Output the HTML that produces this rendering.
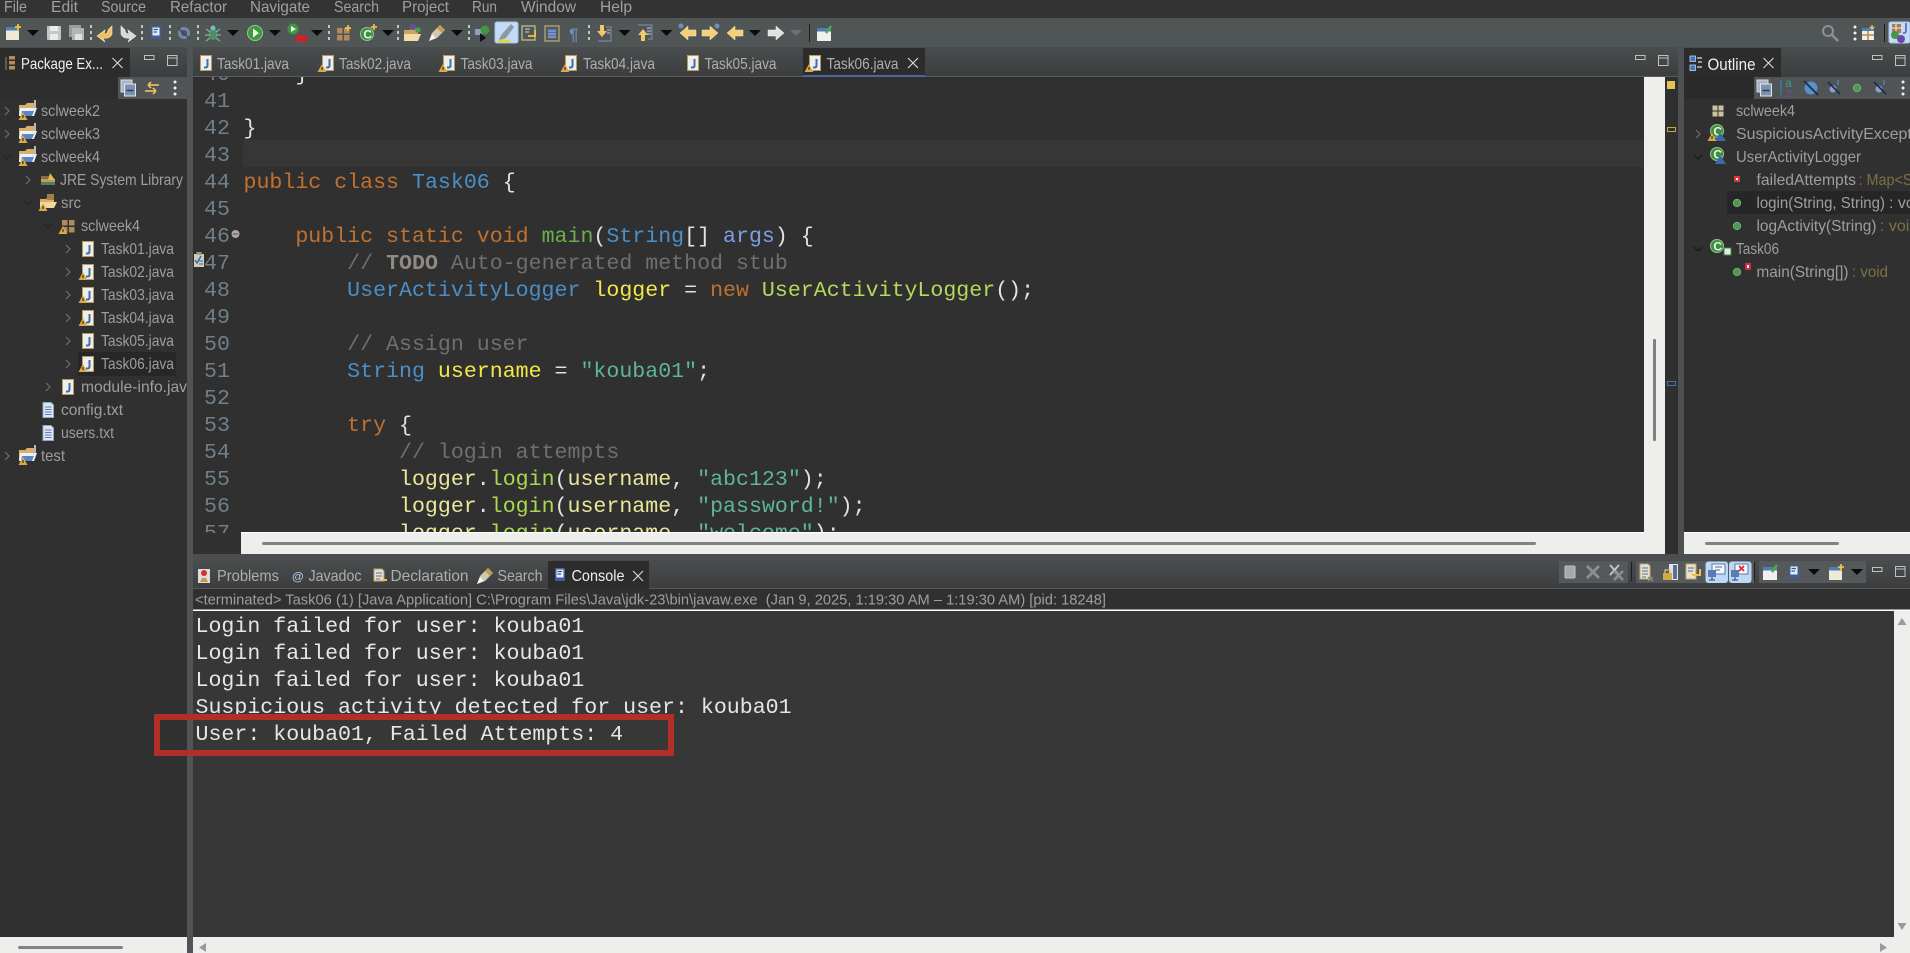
<!DOCTYPE html>
<html><head><meta charset="utf-8"><title>Eclipse</title>
<style>
html,body{margin:0;padding:0;background:#303030;width:1910px;height:953px;overflow:hidden}
svg{display:block}
text{font-family:"Liberation Sans",sans-serif;font-size:16px;white-space:pre}
.m{fill:#a0a0a0}
.t{fill:#aeaeae}
.tree{fill:#9e9e9e}
.ty{fill:#7d7044}
.c{font-family:"Liberation Mono",monospace;font-size:21.6px;fill:#e2e2e2}
.n{font-family:"Liberation Mono",monospace;font-size:21.6px;fill:#70808a}
.k{fill:#c0712f}.b{fill:#4a8fc7}.g{fill:#69b04a}.a{fill:#7c9fe6}.cm{fill:#6f6f6f}.td{fill:#8f8b82;font-weight:bold}
.y{fill:#f2e84b}.py{fill:#ebe79a}.lg{fill:#a9d94f}.s{fill:#5fb49c}.ug{fill:#b5d95a}
.con{font-family:"Liberation Mono",monospace;font-size:21.6px;fill:#e6e6e6}
</style></head><body>
<svg width="1910" height="953" viewBox="0 0 1910 953" xmlns="http://www.w3.org/2000/svg">
<defs>
<linearGradient id="tabg" x1="0" y1="0" x2="0" y2="1"><stop offset="0" stop-color="#4a4d4e"/><stop offset="1" stop-color="#3b3d3e"/></linearGradient>
<clipPath id="codeclip"><rect x="193" y="77" width="1451" height="456"/></clipPath>
<clipPath id="menuclip"><rect x="0" y="0" width="1910" height="18"/></clipPath>
<clipPath id="outclip"><rect x="1684" y="99" width="226" height="434"/></clipPath>
<clipPath id="treeclip"><rect x="0" y="99" width="187" height="838"/></clipPath>
<g id="dd"><path d="M-6-3H6L0 3Z" fill="#0a0a0a"/></g>
<g id="sep"><path d="M0-8V-5M0-2V1M0 4V7" stroke="#c4c4c4" stroke-width="2"/></g>
<g id="jf"><rect x="-5.500" y="-7.500" width="11" height="15" fill="#eeeeea" stroke="#b89a5c"/><path d="M1.500-4V2.500Q1.500 4.500-.5 4.500H-2" fill="none" stroke="#3c6eb0" stroke-width="2"/></g>
<g id="lk"><path d="M0-5 4.500 3H-4.500Z" fill="#d9a94a"/><rect x="-.7" y="-2" width="1.400" height="3" fill="#5a4310"/></g>
<g id="prj"><path d="M-9-5H-3L-1-7H6V5H-9Z" fill="#d8b06a"/><path d="M-8-2H9L6 6H-9Z" fill="#eef2fa"/><path d="M-6 1H6L4 6H-7Z" fill="#5a86c8"/><path d="M7-10V-2Q7 0 4 0" fill="none" stroke="#e4e4e4" stroke-width="1.500"/></g>
<g id="src"><path d="M-8-3H-2L0-5H6V6H-8Z" fill="#d8b06a"/><path d="M-8 0H9L6 6H-8Z" fill="#f0d8a0"/><rect x="-1" y="-8" width="7" height="6" fill="#a67c46"/></g>
<g id="pk"><rect x="-6" y="-6" width="5.500" height="5.500" fill="#b08a5c"/><rect x="1" y="-6" width="5.500" height="5.500" fill="#b08a5c"/><rect x="-6" y="1" width="5.500" height="5.500" fill="#b08a5c"/><rect x="1" y="1" width="5.500" height="5.500" fill="#b08a5c"/></g>
<g id="txt"><path d="M-5-7.500H3L5.500-5V7.500H-5Z" fill="#dfe6f2" stroke="#8ea8cc"/><path d="M-3-3H3.500M-3-.5H3.500M-3 2H3.500M-3 4.500H3.500" stroke="#5a80b8"/></g>
<g id="cl"><circle r="6.500" fill="#3d8f3d" stroke="#8cc88c"/><text x="-3.700" y="4.500" style="font-size:12px;font-weight:bold;fill:#f0f0f0;font-family:'Liberation Sans',sans-serif">C</text></g>
<g id="dot"><circle r="3.800" fill="#4f9a52" stroke="#7fbf80" stroke-width=".7"/></g>
<g id="col"><rect x="-8" y="-8" width="11" height="12" fill="#a9b4c4" stroke="#d4dae2"/><rect x="-4.500" y="-4" width="11" height="12" fill="#7e92ad" stroke="#e2e6ec"/><path d="M-2.500 2.500H4.500" stroke="#16406f" stroke-width="1.500"/></g>
<g id="vd"><circle cy="-6" r="1.500" fill="#f0f0f0"/><circle cy="0" r="1.500" fill="#f0f0f0"/><circle cy="6" r="1.500" fill="#f0f0f0"/></g>
<g id="x"><path d="M-5-5 5 5M5-5-5 5" stroke="#dcdcdc" stroke-width="1.100"/></g>
<g id="min"><rect x="0" y="0" width="9.500" height="4" fill="none" stroke="#c0c0c0"/></g>
<g id="max"><rect x="0" y="0" width="9.500" height="10" fill="none" stroke="#c0c0c0"/><path d="M0 2.500H9.500" stroke="#c0c0c0"/></g>
<g id="cr"><path d="M-2-4 2 0-2 4" fill="none" stroke="#6e6e6e" stroke-width="1.200"/></g>
<g id="cd"><path d="M-4-2 0 2 4-2" fill="none" stroke="#242424" stroke-width="1.300"/></g>
<g id="cdo"><path d="M-4-2 0 2 4-2" fill="none" stroke="#1c1c1c" stroke-width="1.500"/></g>
<g id="co"><rect x="-5" y="-7" width="10" height="13" rx="1" fill="#3e5f9a"/><rect x="-3.500" y="-5.500" width="7" height="8" fill="#e6ecf6"/><path d="M-2.500-3.500H2M-2.500-1H1" stroke="#365689" stroke-width="1.200"/></g>
<g id="fp"><path d="M-7-6H7V7H-7Z" fill="#f0f0ee"/><rect x="-7" y="-6" width="14" height="3.500" fill="#4d7fb5"/><path d="M2-1 7-8" stroke="#4caa3f" stroke-width="2.500"/></g>
<g id="nw"><rect x="-7" y="-6" width="13" height="13" fill="#f0ead4"/><rect x="-7" y="-6" width="13" height="3.500" fill="#4d7fb5"/><path d="M5-9V-3M2-6H8" stroke="#f0c040" stroke-width="1.800"/></g>
</defs>

<!-- base -->
<rect width="1910" height="953" fill="#303030"/>
<!-- menu bar -->
<rect width="1910" height="18" fill="#333333"/>
<g clip-path="url(#menuclip)" class="m">
<text class="m" x="4" y="12" textLength="23" lengthAdjust="spacingAndGlyphs">File</text>
<text class="m" x="51" y="12" textLength="27" lengthAdjust="spacingAndGlyphs">Edit</text>
<text class="m" x="101" y="12" textLength="45" lengthAdjust="spacingAndGlyphs">Source</text>
<text class="m" x="170" y="12" textLength="57" lengthAdjust="spacingAndGlyphs">Refactor</text>
<text class="m" x="250" y="12" textLength="60" lengthAdjust="spacingAndGlyphs">Navigate</text>
<text class="m" x="334" y="12" textLength="45" lengthAdjust="spacingAndGlyphs">Search</text>
<text class="m" x="402" y="12" textLength="47" lengthAdjust="spacingAndGlyphs">Project</text>
<text class="m" x="472" y="12" textLength="25" lengthAdjust="spacingAndGlyphs">Run</text>
<text class="m" x="521" y="12" textLength="55" lengthAdjust="spacingAndGlyphs">Window</text>
<text class="m" x="600" y="12" textLength="32" lengthAdjust="spacingAndGlyphs">Help</text>
</g>
<!-- toolbar -->
<rect y="18" width="1910" height="29" fill="#505556"/>
<rect x="495" y="22" width="23" height="21" rx="2" fill="#c3dbf5" stroke="#a5c5ea"/>
<rect x="1889" y="22" width="21" height="21" rx="2" fill="#c3dbf5" stroke="#a5c5ea"/>
<g>
<use href="#nw" x="13" y="33"/><use href="#dd" x="33" y="33"/>
<g transform="translate(54 33)"><rect x="-7" y="-7" width="14" height="14" rx="1" fill="#c6c6c6"/><rect x="-4" y="-7" width="8" height="5" fill="#ececec"/><rect x="-4" y="1" width="8" height="6" fill="#ececec"/></g>
<g transform="translate(77 33)"><rect x="-8" y="-8" width="12" height="12" fill="#9c9c9c"/><rect x="-5" y="-5" width="12" height="12" fill="#b4b4b4"/><rect x="-2" y="1" width="7" height="6" fill="#e2e2e2"/></g>
<use href="#sep" x="91" y="33"/>
<path d="M112 26V34Q110 39 103 38L105 42 97 36 105 30 104 34Q108 34 108 30Z" fill="#f0c060" stroke="#fbe7b0" stroke-width=".6"/>
<path d="M121 26V34Q123 39 130 38L128 42 136 36 128 30 129 34Q125 34 125 30Z" fill="#d8d8d8" stroke="#f0f0f0" stroke-width=".6"/>
<use href="#sep" x="142" y="33"/><use href="#co" x="156" y="33"/><use href="#sep" x="170" y="33"/>
<g transform="translate(184 33)"><circle r="6" fill="#7488a8"/><circle r="3" fill="#505556"/><path d="M-6-5 6 6" stroke="#35486a" stroke-width="1.500"/></g>
<use href="#sep" x="198" y="33"/>
<g transform="translate(213 33)"><ellipse cx="0" cy="1" rx="4.500" ry="6" fill="#4d8f68"/><path d="M-7-4-3-1M7-4 3-1M-8 2H-3M8 2H3M-7 8-3 5M7 8 3 5" stroke="#9ac0a8"/><circle cy="-5" r="2.500" fill="#7ab8c8"/></g>
<use href="#dd" x="233" y="33"/>
<g transform="translate(255 33)"><circle r="7.500" fill="#3f9a3f" stroke="#92cc86"/><path d="M-2-4.500 4 0-2 4.500Z" fill="#f4f4f4"/></g>
<use href="#dd" x="275" y="33"/>
<g transform="translate(297 33)"><circle cx="-4" cy="-4" r="5.500" fill="#3f9a3f"/><path d="M-6-7-1-4-6-1Z" fill="#f4f4f4"/><rect x="-1" y="2" width="11" height="7" rx="1" fill="#c8242c"/></g>
<use href="#dd" x="317" y="33"/>
<use href="#sep" x="329" y="33"/>
<use href="#pk" x="343" y="34"/><path d="M348 25V31M345 28H351" stroke="#f0c040" stroke-width="1.700"/>
<use href="#cl" x="367" y="34"/><path d="M374 24V30M371 27H377" stroke="#f0c040" stroke-width="1.700"/>
<use href="#dd" x="388" y="33"/>
<use href="#sep" x="398" y="33"/>
<g transform="translate(412 34)"><path d="M-8-4H-2L0-6H6V6H-8Z" fill="#c8a466"/><path d="M-8 0H9L6 7H-8Z" fill="#f2dda8"/><circle cx="1" cy="-7" r="3" fill="#6050a0"/><circle cx="6" cy="-4" r="2.800" fill="#4d9a50"/></g>
<g transform="translate(437 33)"><path d="M-8 8-5 0 3-8 8-3 0 5Z" fill="#cfc8b4"/><path d="M-8 8-5 1-1 5Z" fill="#f6f6f2"/><path d="M3-8 8-3 5 0 0-5Z" fill="#c89a50"/></g>
<use href="#dd" x="457" y="33"/>
<use href="#sep" x="469" y="33"/>
<g transform="translate(482 33)"><rect x="-7" y="-4" width="7" height="6" fill="#8fa0bc"/><path d="M-2 0 4 5-2 9Z" fill="#111"/><circle cx="3" cy="-3" r="4.500" fill="#439443"/></g>
<g transform="translate(506 33)"><path d="M-8 8-4 1 5-9 8-6 0 5Z" fill="#8c98a6"/><path d="M-8 8H4" stroke="#e8d24a" stroke-width="3"/></g>
<g transform="translate(529 33)"><rect x="-7" y="-7" width="13" height="14" fill="none" stroke="#c8b888" stroke-width="1.300"/><path d="M-4-4H1M-4-1H0" stroke="#cfd4da"/><path d="M6-3V3H-1" fill="none" stroke="#f0c040" stroke-width="1.800"/></g>
<g transform="translate(552 33)"><rect x="-7" y="-7" width="14" height="15" fill="none" stroke="#b8a878" stroke-width="1.300"/><rect x="-4.500" y="-4.500" width="9" height="10" fill="#5470a0"/><path d="M-4-2H4M-4 1H4M-4 4H4" stroke="#9fb4d8"/></g>
<text x="569" y="40" style="font-size:17px;fill:#6a8cb8;font-weight:bold">¶</text>
<use href="#sep" x="589" y="33"/>
<g transform="translate(604 33)"><path d="M-4-8H0V-2H3L-2 4-7-2H-4Z" fill="#f0c86a"/><path d="M2-6H7V8H-6" fill="none" stroke="#7f94b4"/><path d="M3-3H6M3 0H6" stroke="#c8d0dc"/></g>
<use href="#dd" x="624.500" y="33"/>
<g transform="translate(645 33)"><path d="M-4 8H0V2H3L-2-4-7 2H-4Z" fill="#f0c86a"/><path d="M-7-8H7V6H3" fill="none" stroke="#8094b4"/><path d="M2-5H6M2-2H6M2 1H6" stroke="#c8d0dc"/></g>
<use href="#dd" x="666.500" y="33"/>
<g transform="translate(688 33)"><path d="M8-3H0V-7L-8 0 0 7V3H8Z" fill="#f3cf7c" stroke="#fbe8b8" stroke-width=".5"/><circle cx="-7" cy="-7" r="2.500" fill="#6f8fb8"/></g>
<g transform="translate(710 33)"><path d="M-8-3H0V-7L8 0 0 7V3H-8Z" fill="#f3cf7c" stroke="#fbe8b8" stroke-width=".5"/><circle cx="7" cy="-7" r="2.500" fill="#6f8fb8"/></g>
<path d="M743 30H735V26L727 33 735 40V36H743Z" fill="#f3cf7c" stroke="#fbe8b8" stroke-width=".5"/>
<use href="#dd" x="755" y="33"/>
<path d="M768 30H776V26L784 33 776 40V36H768Z" fill="#e2e2e2" stroke="#f0f0f0" stroke-width=".5"/>
<path d="M790 30H802L796 36Z" fill="#6c7072"/>
<rect x="809" y="24" width="1" height="18" fill="#1c1c1c"/>
<use href="#fp" x="824" y="34"/>
<g transform="translate(1830 33)"><circle cx="-2" cy="-2" r="5" fill="none" stroke="#8c9092" stroke-width="2"/><path d="M2 2 8 8" stroke="#8c9092" stroke-width="2.500"/></g>
<use href="#vd" x="1855" y="33"/>
<g transform="translate(1868 33)"><rect x="-6" y="-5" width="12" height="12" fill="#eee"/><rect x="-6" y="-5" width="12" height="3" fill="#4d7fb5"/><path d="M0-2V7M-6 2H6" stroke="#b98a3a" stroke-width="1.500"/><path d="M4-8V-3M1.500-5.500H6.500" stroke="#f0c040" stroke-width="1.500"/></g>
<rect x="1884" y="24" width="1" height="18" fill="#1c1c1c"/>
<g transform="translate(1900 32)"><rect x="-8" y="-8" width="9" height="9" fill="#b07a50"/><path d="M-4-8V1M-8-4H1" stroke="#eee"/><circle cx="-5" cy="3" r="4" fill="#46964a"/><circle cx="1" cy="7" r="4" fill="#6a4aa8"/><path d="M6-9V-1Q6 1 3 1" fill="none" stroke="#4a78c0" stroke-width="1.800"/></g>
</g>

<!-- tab rows -->
<rect y="47" width="187" height="30" fill="url(#tabg)"/>
<rect x="193" y="47" width="1485" height="30" fill="url(#tabg)"/>
<rect x="1684" y="47" width="226" height="30" fill="url(#tabg)"/>
<rect x="193" y="76" width="1485" height="1" fill="#5a5c5d"/>
<!-- sashes -->
<rect x="187" y="47" width="6" height="906" fill="#505456"/>
<rect x="1678" y="47" width="6" height="507" fill="#4d5153"/>
<rect x="193" y="554" width="1717" height="6" fill="#4a4e50"/>

<!-- Package explorer -->
<rect y="48" width="130" height="29" fill="#2c2c2c"/>
<g transform="translate(10 63)"><path d="M-4-6V7" stroke="#8a8a8a"/><rect x="-1" y="-7" width="6" height="3.500" fill="#b88a58"/><rect x="-1" y="-2" width="6" height="3.500" fill="#b88a58"/><rect x="-1" y="3" width="6" height="3.500" fill="#b88a58"/></g>
<text x="21" y="69" style="fill:#f0f0f0" textLength="82" lengthAdjust="spacingAndGlyphs">Package Ex...</text>
<use href="#x" x="117.500" y="63"/>
<use href="#min" x="144.500" y="55.500"/><use href="#max" x="167.500" y="55.500"/>
<rect y="77" width="118" height="22" fill="#2d2d2d"/>
<rect x="118" y="77" width="69" height="22" fill="#505456"/>
<use href="#col" x="129" y="88"/>
<g transform="translate(152 88)"><path d="M7-3H-4M-4-3-1-6M-4-3-1 0M-7 3H4M4 3 1 0M4 3 1 6" fill="none" stroke="#e8b860" stroke-width="1.800"/></g>
<use href="#vd" x="175" y="88"/>
<rect y="99" width="187" height="838" fill="#303030"/>

<g clip-path="url(#treeclip)">
<use href="#cr" x="7" y="111"/><use href="#prj" x="28" y="110"/><use href="#lk" x="23" y="117"/>
<text class="tree" x="41" y="116" textLength="59" lengthAdjust="spacingAndGlyphs">sclweek2</text>
<use href="#cr" x="7" y="134"/><use href="#prj" x="28" y="133"/><use href="#lk" x="23" y="140"/>
<text class="tree" x="41" y="139" textLength="59" lengthAdjust="spacingAndGlyphs">sclweek3</text>
<use href="#cd" x="7" y="157"/><use href="#prj" x="28" y="156"/><use href="#lk" x="23" y="163"/>
<text class="tree" x="41" y="162" textLength="59" lengthAdjust="spacingAndGlyphs">sclweek4</text>
<use href="#cr" x="28" y="180"/>
<g transform="translate(48 180)"><rect x="-7" y="-1" width="14" height="3" fill="#c89a48"/><rect x="-7" y="2" width="14" height="3" fill="#4d7f6a"/><rect x="-7" y="-4" width="10" height="3" fill="#80704a"/><path d="M2-7 7 0H0Z" fill="#e8b850"/></g>
<text class="tree" x="60" y="185" textLength="123" lengthAdjust="spacingAndGlyphs">JRE System Library</text>
<use href="#cd" x="28" y="203"/><use href="#src" x="48" y="202"/><use href="#lk" x="43" y="208"/>
<text class="tree" x="61" y="208" textLength="20" lengthAdjust="spacingAndGlyphs">src</text>
<use href="#cd" x="48" y="226"/><use href="#pk" x="68" y="226"/><use href="#lk" x="63" y="231"/>
<text class="tree" x="81" y="231" textLength="59" lengthAdjust="spacingAndGlyphs">sclweek4</text>
<use href="#cr" x="68" y="249"/><use href="#jf" x="88" y="249"/>
<text class="tree" x="101" y="254" textLength="73" lengthAdjust="spacingAndGlyphs">Task01.java</text>
<use href="#cr" x="68" y="272"/><use href="#jf" x="88" y="272"/><use href="#lk" x="83" y="277"/>
<text class="tree" x="101" y="277" textLength="73" lengthAdjust="spacingAndGlyphs">Task02.java</text>
<use href="#cr" x="68" y="295"/><use href="#jf" x="88" y="295"/><use href="#lk" x="83" y="300"/>
<text class="tree" x="101" y="300" textLength="73" lengthAdjust="spacingAndGlyphs">Task03.java</text>
<use href="#cr" x="68" y="318"/><use href="#jf" x="88" y="318"/><use href="#lk" x="83" y="323"/>
<text class="tree" x="101" y="323" textLength="73" lengthAdjust="spacingAndGlyphs">Task04.java</text>
<use href="#cr" x="68" y="341"/><use href="#jf" x="88" y="341"/>
<text class="tree" x="101" y="346" textLength="73" lengthAdjust="spacingAndGlyphs">Task05.java</text>
<rect x="78" y="352" width="98" height="24" fill="#272727"/>
<use href="#cr" x="68" y="364"/><use href="#jf" x="88" y="364"/><use href="#lk" x="83" y="369"/>
<text class="tree" x="101" y="369" textLength="73" lengthAdjust="spacingAndGlyphs">Task06.java</text>
<use href="#cr" x="48" y="387"/><use href="#jf" x="68" y="387"/>
<text class="tree" x="81" y="392" textLength="106" lengthAdjust="spacingAndGlyphs">module-info.jav</text>
<use href="#txt" x="48" y="410"/>
<text class="tree" x="61" y="415" textLength="62" lengthAdjust="spacingAndGlyphs">config.txt</text>
<use href="#txt" x="48" y="433"/>
<text class="tree" x="61" y="438" textLength="53" lengthAdjust="spacingAndGlyphs">users.txt</text>
<use href="#cr" x="7" y="456"/><use href="#prj" x="28" y="455"/><use href="#lk" x="23" y="462"/>
<text class="tree" x="41" y="461" textLength="24" lengthAdjust="spacingAndGlyphs">test</text>
</g>

<!-- editor tabs -->
<rect x="803" y="48" width="122" height="27" fill="#2c2c2c"/>
<rect x="803" y="75" width="122" height="2" fill="#466a9e"/>
<use href="#jf" x="206" y="63"/>
<text class="t" x="217" y="69" textLength="72" lengthAdjust="spacingAndGlyphs">Task01.java</text>
<use href="#jf" x="328" y="63"/><use href="#lk" x="322" y="69"/>
<text class="t" x="339" y="69" textLength="72" lengthAdjust="spacingAndGlyphs">Task02.java</text>
<use href="#jf" x="449" y="63"/><use href="#lk" x="443" y="69"/>
<text class="t" x="460.500" y="69" textLength="72" lengthAdjust="spacingAndGlyphs">Task03.java</text>
<use href="#jf" x="571" y="63"/><use href="#lk" x="565" y="69"/>
<text class="t" x="583" y="69" textLength="72" lengthAdjust="spacingAndGlyphs">Task04.java</text>
<use href="#jf" x="693" y="63"/>
<text class="t" x="704.500" y="69" textLength="72" lengthAdjust="spacingAndGlyphs">Task05.java</text>
<use href="#jf" x="815" y="63"/><use href="#lk" x="809" y="69"/>
<text class="t" x="826.500" y="69" textLength="72" lengthAdjust="spacingAndGlyphs">Task06.java</text>
<use href="#x" x="913" y="63"/>
<use href="#min" x="1635.500" y="55.500"/><use href="#max" x="1658.500" y="55.500"/>

<!-- editor -->
<rect x="193" y="77" width="1485" height="477" fill="#303030"/>
<rect x="243" y="140" width="1401" height="27" fill="#363636"/>
<g clip-path="url(#codeclip)">
<text class="n" x="204" y="107">41</text><text class="n" x="204" y="134">42</text><text class="n" x="204" y="161">43</text><text class="n" x="204" y="188">44</text><text class="n" x="204" y="215">45</text><text class="n" x="204" y="242">46</text><text class="n" x="204" y="269">47</text><text class="n" x="204" y="296">48</text><text class="n" x="204" y="323">49</text><text class="n" x="204" y="350">50</text><text class="n" x="204" y="377">51</text><text class="n" x="204" y="404">52</text><text class="n" x="204" y="431">53</text><text class="n" x="204" y="458">54</text><text class="n" x="204" y="485">55</text><text class="n" x="204" y="512">56</text><text class="n" x="204" y="539">57</text><text class="n" x="204" y="80">40</text>
<text class="c" x="243.500" y="80">    }</text>
<text class="c" x="243.500" y="134">}</text>
<text class="c" x="243.500" y="188"><tspan class="k">public class</tspan> <tspan class="b">Task06</tspan> {</text>
<text class="c" x="243.500" y="242">    <tspan class="k">public static void</tspan> <tspan class="g">main</tspan>(<tspan class="b">String</tspan>[] <tspan class="a">args</tspan>) {</text>
<text class="c" x="243.500" y="269">        <tspan class="cm">// </tspan><tspan class="td">TODO</tspan><tspan class="cm"> Auto-generated method stub</tspan></text>
<text class="c" x="243.500" y="296">        <tspan class="b">UserActivityLogger</tspan> <tspan class="y">logger</tspan> = <tspan class="k">new</tspan> <tspan class="ug">UserActivityLogger</tspan>();</text>
<text class="c" x="243.500" y="350">        <tspan class="cm">// Assign user</tspan></text>
<text class="c" x="243.500" y="377">        <tspan class="b">String</tspan> <tspan class="y">username</tspan> = <tspan class="s">"kouba01"</tspan>;</text>
<text class="c" x="243.500" y="431">        <tspan class="k">try</tspan> {</text>
<text class="c" x="243.500" y="458">            <tspan class="cm">// login attempts</tspan></text>
<text class="c" x="243.500" y="485">            <tspan class="py">logger</tspan>.<tspan class="lg">login</tspan>(<tspan class="py">username</tspan>, <tspan class="s">"abc123"</tspan>);</text>
<text class="c" x="243.500" y="512">            <tspan class="py">logger</tspan>.<tspan class="lg">login</tspan>(<tspan class="py">username</tspan>, <tspan class="s">"password!"</tspan>);</text>
<text class="c" x="243.500" y="539">            <tspan class="py">logger</tspan>.<tspan class="lg">login</tspan>(<tspan class="py">username</tspan>, <tspan class="s">"welcome"</tspan>);</text>
</g>
<circle cx="235.500" cy="234" r="4" fill="#a8a8a8"/><path d="M233 234H238" stroke="#555"/>
<g transform="translate(199 260)"><rect x="-5" y="-6" width="10" height="13" fill="#d8cfa8"/><rect x="-2.500" y="-8" width="5" height="3" fill="#9a9a9a"/><path d="M-4 0-2 3 2-4" fill="none" stroke="#2a6ae0" stroke-width="1.500"/><path d="M0 1H4M0 4H4" stroke="#2a6ae0"/></g>
<!-- editor scrollbars -->
<rect x="1644" y="77" width="21" height="477" fill="#eeeeec"/>
<rect x="241" y="533" width="1424" height="21" fill="#eeeeec"/>
<rect x="241" y="532" width="1403" height="1" fill="#ffffff"/>
<rect x="1653" y="339" width="3" height="102" rx="1" fill="#808080"/>
<rect x="262" y="542" width="1274" height="3" rx="1.500" fill="#828282"/>
<rect x="1665" y="77" width="13" height="477" fill="#2f2f2f"/>
<rect x="1667" y="81" width="8" height="8" fill="#e6c350"/>
<rect x="1667.500" y="127.500" width="8" height="4" fill="none" stroke="#c8a63c"/>
<rect x="1667.500" y="381.500" width="8" height="4" fill="none" stroke="#4a6fb0"/>

<!-- outline -->
<rect x="1684" y="48" width="97" height="29" fill="#2c2c2c"/>
<g transform="translate(1696 63)"><rect x="-6" y="-7" width="5.500" height="5.500" fill="#3f74c0" stroke="#dbe4f2" stroke-width=".7"/><rect x="-6" y="2" width="5.500" height="5.500" fill="#3f74c0" stroke="#dbe4f2" stroke-width=".7"/><path d="M1-5H6M2-1H6M1 4H6" stroke="#dcdcdc" stroke-width="1.200"/></g>
<text x="1707.500" y="70" style="fill:#f0f0f0;font-size:17px" textLength="48" lengthAdjust="spacingAndGlyphs">Outline</text>
<use href="#x" x="1768.500" y="63"/>
<use href="#min" x="1872.500" y="55.500"/><use href="#max" x="1895.500" y="55.500"/>
<rect x="1684" y="77" width="70" height="22" fill="#2a2a2a"/>
<rect x="1754" y="77" width="156" height="22" fill="#505456"/>
<use href="#col" x="1765" y="88"/>
<g transform="translate(1788 88)"><path d="M-7-8V7" stroke="#3f78b0" stroke-width="1.300"/><text x="-3" y="-1" style="font-size:12px;fill:#3fa088">a</text><text x="-2" y="9" style="font-size:12px;fill:#7a4aa0">z</text></g>
<g transform="translate(1811 88)"><circle r="6.500" fill="#5b8fc8"/><path d="M-7-7 7 7" stroke="#1c2c55" stroke-width="1.800"/></g>
<g transform="translate(1834 88)"><circle cx="-1" cy="1" r="3.500" fill="#8da0c0"/><path d="M-6-6 6 6" stroke="#1c2c55" stroke-width="1.800"/><path d="M4-8V-3" stroke="#4d80c0" stroke-width="1.500"/></g>
<use href="#dot" x="1857" y="88"/>
<g transform="translate(1880 88)"><circle cx="-1" cy="1" r="3.500" fill="#8da0c0"/><path d="M-6-6 6 6" stroke="#1c2c55" stroke-width="1.800"/><path d="M4-8V-3" stroke="#4d80c0" stroke-width="1.500"/></g>
<use href="#vd" x="1903" y="88"/>
<rect x="1684" y="99" width="226" height="434" fill="#303030"/>
<rect x="1727" y="191" width="183" height="23" fill="#262626"/>
<g clip-path="url(#outclip)">
<g transform="translate(1718 111)"><rect x="-5.500" y="-5.500" width="5" height="5" fill="#c8c59c"/><rect x=".5" y="-5.500" width="5" height="5" fill="#c8c59c"/><rect x="-5.500" y=".5" width="5" height="5" fill="#c8c59c"/><rect x=".5" y=".5" width="5" height="5" fill="#c8c59c"/></g>
<text class="tree" x="1736" y="116" textLength="59" lengthAdjust="spacingAndGlyphs">sclweek4</text>
<use href="#cr" x="1698" y="134"/><use href="#cl" x="1717" y="131"/><path d="M1720 132 1726 141H1715Z" fill="#3f68a8"/><use href="#lk" x="1712" y="138"/>
<text class="tree" x="1736" y="139" textLength="197" lengthAdjust="spacingAndGlyphs">SuspiciousActivityException</text>
<use href="#cdo" x="1698" y="157"/><use href="#cl" x="1717" y="154"/><path d="M1720 155 1726 164H1715Z" fill="#3f68a8"/>
<text class="tree" x="1736" y="162" textLength="125" lengthAdjust="spacingAndGlyphs">UserActivityLogger</text>
<rect x="1734" y="176" width="6" height="6" fill="#d8383c"/><rect x="1736" y="178" width="2" height="2" fill="#f4f4f4"/>
<text class="tree" x="1756.500" y="185" textLength="99.500" lengthAdjust="spacingAndGlyphs">failedAttempts</text><text class="ty" x="1858.500" y="185" textLength="54" lengthAdjust="spacingAndGlyphs">: Map&lt;S</text>
<use href="#dot" x="1737" y="203"/>
<text class="tree" x="1756.500" y="208" textLength="128.500" lengthAdjust="spacingAndGlyphs">login(String, String)</text><text class="tree" x="1889" y="208">: vo</text>
<use href="#dot" x="1737" y="226"/>
<text class="tree" x="1756.500" y="231" textLength="120" lengthAdjust="spacingAndGlyphs">logActivity(String)</text><text class="ty" x="1880" y="231">: void</text>
<use href="#cdo" x="1698" y="249"/><use href="#cl" x="1717" y="246"/><rect x="1724" y="248" width="7" height="7" fill="#e8e8e8" stroke="#3a8a3a"/>
<text class="tree" x="1736" y="254" textLength="43" lengthAdjust="spacingAndGlyphs">Task06</text>
<use href="#dot" x="1737" y="272"/><rect x="1745" y="263" width="6" height="7" fill="#c83048"/><rect x="1747" y="265" width="2" height="3" fill="#f0f0f0"/>
<text class="tree" x="1756.500" y="277" textLength="92" lengthAdjust="spacingAndGlyphs">main(String[])</text><text class="ty" x="1852" y="277" textLength="36" lengthAdjust="spacingAndGlyphs">: void</text>
</g>
<rect x="1684" y="533" width="226" height="21" fill="#eeeeec"/>
<rect x="1684" y="532" width="226" height="1" fill="#ffffff"/>
<rect x="1705" y="542" width="134" height="3" rx="1.500" fill="#828282"/>

<!-- bottom panel -->
<rect x="193" y="560" width="1717" height="29" fill="url(#tabg)"/>
<rect x="193" y="588" width="1717" height="1" fill="#565859"/>
<rect x="548" y="561" width="101" height="28" fill="#2c2c2c"/>
<g transform="translate(204 576)"><rect x="-6" y="-7" width="12" height="14" fill="#ddd"/><circle cy="-3" r="3" fill="#d83030"/><path d="M-4 6 -2 2H2L4 6" fill="#c89a48"/></g>
<text class="t" x="217" y="581" textLength="62" lengthAdjust="spacingAndGlyphs">Problems</text>
<text x="292" y="580.500" style="font-size:12px;fill:#a9c2e4;font-weight:bold">@</text>
<text class="t" x="308.500" y="581" textLength="53" lengthAdjust="spacingAndGlyphs">Javadoc</text>
<g transform="translate(379 576)"><path d="M-5-7H3L5-5V5H-5Z" fill="#e8e0c8" stroke="#b8a070"/><path d="M-3-3H3M-3 0H3M-3 3H1" stroke="#4d70b0"/><path d="M3 4H8" stroke="#f0c040" stroke-width="2"/></g>
<text class="t" x="390.500" y="581" textLength="78" lengthAdjust="spacingAndGlyphs">Declaration</text>
<g transform="translate(485 576)"><path d="M-8 8-5 0 3-8 8-3 0 5Z" fill="#cfc8b4"/><path d="M-8 8-5 1-1 5Z" fill="#f6f6f2"/><path d="M3-8 8-3 5 0 0-5Z" fill="#c89a50"/></g>
<text class="t" x="497.500" y="581" textLength="45" lengthAdjust="spacingAndGlyphs">Search</text>
<use href="#co" x="560" y="575"/>
<text x="571.500" y="581" style="fill:#efefef" textLength="53" lengthAdjust="spacingAndGlyphs">Console</text>
<use href="#x" x="638" y="576"/>
<!-- console toolbar -->
<rect x="1559" y="561" width="69" height="22" fill="#56595b"/>
<rect x="1636" y="561" width="118" height="22" fill="#56595b"/>
<rect x="1759" y="561" width="107" height="22" fill="#56595b"/>
<rect x="1631" y="562" width="1" height="19" fill="#1e1e1e"/><rect x="1754" y="562" width="1" height="19" fill="#1e1e1e"/>
<rect x="1705.500" y="561.500" width="22.500" height="21.500" rx="3" fill="#bcd8f5"/>
<rect x="1729" y="561.500" width="22.500" height="21.500" rx="3" fill="#bcd8f5"/>
<rect x="1565" y="566" width="10" height="12" rx="1" fill="#a8a8a8" stroke="#c2c2c2"/>
<path d="M1587 566 1599 578M1599 566 1587 578" stroke="#8e8e8e" stroke-width="3"/>
<path d="M1610 565 1619 575M1619 565 1610 575" stroke="#c8c8c8" stroke-width="1.800"/><path d="M1614 571 1623 580M1623 571 1614 580" stroke="#8e8e8e" stroke-width="2.500"/>
<g transform="translate(1645 572)"><path d="M-5-8H3L5-6V7H-5Z" fill="#e9e2c8" stroke="#bba878"/><path d="M-3-4H3M-3-1H3M-3 2H3M-3 5H1" stroke="#5070aa"/><path d="M3 5 8 9M8 5 3 9" stroke="#8a8a8a" stroke-width="1.500"/></g>
<g transform="translate(1670 572)"><rect x="-1" y="-8" width="9" height="16" fill="#e0e4ea"/><rect x="3" y="-7" width="4" height="14" fill="#5a7098"/><rect x="-7" y="1" width="9" height="7" fill="#d8a840"/><path d="M-5 1V-2H0V1" fill="none" stroke="#d8c088" stroke-width="1.300"/></g>
<g transform="translate(1693 572)"><path d="M-7-8H3V7H-7Z" fill="#e9e2c8" stroke="#bba878"/><path d="M-5-4H1M-5-1H0" stroke="#5070aa"/><path d="M7-3V3H-1" fill="none" stroke="#f0c040" stroke-width="2"/></g>
<g transform="translate(1718 572)"><rect x="-6" y="-8" width="13" height="10" fill="#f4f6fa" stroke="#5a7cb0"/><path d="M-3-5H4M-3-2H2" stroke="#4d6fa8"/><rect x="-10" y="-2" width="8" height="7" fill="#5a7cb0"/><path d="M-6 5V8M-9 8H-3" stroke="#3f5f96" stroke-width="1.300"/></g>
<g transform="translate(1741 572)"><rect x="-6" y="-8" width="13" height="10" fill="#f4f6fa" stroke="#5a7cb0"/><path d="M-2-6 3-1M3-6-2-1" stroke="#d82c2c" stroke-width="1.700"/><rect x="-10" y="-2" width="8" height="7" fill="#5a7cb0"/><path d="M-6 5V8M-9 8H-3" stroke="#3f5f96" stroke-width="1.300"/></g>
<use href="#fp" x="1770" y="573"/>
<use href="#co" x="1794" y="572"/>
<use href="#dd" x="1814" y="572"/>
<use href="#nw" x="1836" y="573"/>
<use href="#dd" x="1857" y="572"/>
<use href="#min" x="1872.500" y="567.500"/><use href="#max" x="1895.500" y="566.500"/>

<rect x="193" y="589" width="1717" height="20" fill="#303030"/>
<text x="195" y="604.500" style="font-size:14.500px;fill:#9e9e9e" textLength="911" lengthAdjust="spacingAndGlyphs">&lt;terminated&gt; Task06 (1) [Java Application] C:\Program Files\Java\jdk-23\bin\javaw.exe  (Jan 9, 2025, 1:19:30 AM – 1:19:30 AM) [pid: 18248]</text>
<rect x="193" y="609" width="1717" height="1" fill="#9a9a9a"/>
<rect x="193" y="610" width="1717" height="1" fill="#ffffff"/>
<rect x="193" y="611" width="1701" height="326" fill="#373737"/>
<text class="con" x="195.500" y="632">Login failed for user: kouba01</text>
<text class="con" x="195.500" y="659">Login failed for user: kouba01</text>
<text class="con" x="195.500" y="686">Login failed for user: kouba01</text>
<text class="con" x="195.500" y="713">Suspicious activity detected for user: kouba01</text>
<text class="con" x="195.500" y="740">User: kouba01, Failed Attempts: 4</text>
<!-- console scrollbars -->
<rect x="1894" y="611" width="16" height="342" fill="#eeeeec"/>
<path d="M1897.500 625 1902 618 1906.500 625Z" fill="#9a9a9a"/>
<path d="M1897.500 923 1902 930 1906.500 923Z" fill="#9a9a9a"/>
<rect x="193" y="937" width="1717" height="16" fill="#eeeeec"/>
<path d="M206 943 199 947.500 206 952Z" fill="#9a9a9a"/>
<path d="M1880 943 1887 947.500 1880 952Z" fill="#9a9a9a"/>
<rect y="937" width="187" height="16" fill="#eeeeec"/>
<rect x="18" y="946" width="105" height="3" rx="1.500" fill="#828282"/>
<!-- annotation -->
<rect x="157" y="717" width="514" height="36" fill="none" stroke="#b03029" stroke-width="6"/>
</svg>
</body></html>
